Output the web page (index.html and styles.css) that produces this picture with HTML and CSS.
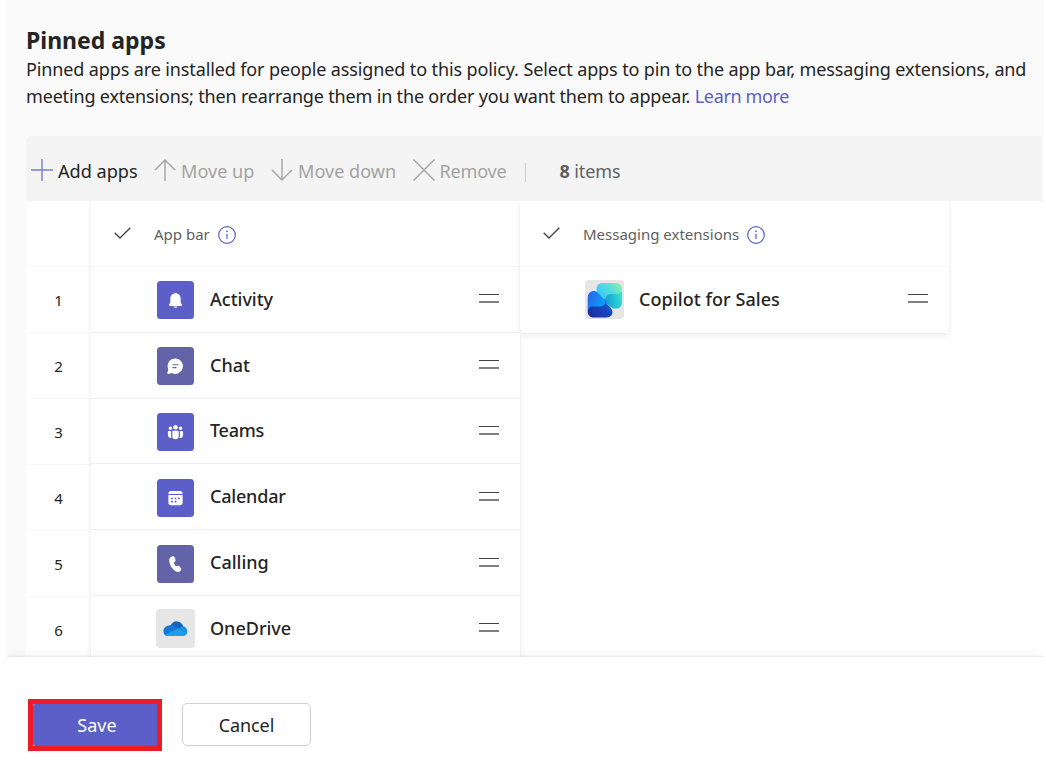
FILE: index.html
```html
<!DOCTYPE html>
<html lang="en">
<head>
<meta charset="utf-8">
<title>Pinned apps</title>
<link rel="stylesheet" href="styles.css">
</head>
<body>
<main class="panel">
  <h1 class="title">Pinned apps</h1>
  <p class="intro">Pinned apps are installed for people assigned to this policy. Select apps to pin to the app bar, messaging extensions, and<br><span class="intro-second">meeting extensions; then rearrange them in the order you want them to appear.</span> <a class="link">Learn more</a></p>

  <div class="toolbar">
    <button class="tool tool-add"><svg class="tool-icon" viewBox="0 0 22 22"><path d="M11 0v22M0 11h22"/></svg><span>Add apps</span></button>
    <button class="tool tool-up"><svg class="tool-icon" viewBox="0 0 22 22"><path d="M11 22V1M1 11 11 1l10 10"/></svg><span>Move up</span></button>
    <button class="tool tool-down"><svg class="tool-icon" viewBox="0 0 22 22"><path d="M11 0v21M1 11l10 10 10-10"/></svg><span>Move down</span></button>
    <button class="tool tool-remove"><svg class="tool-icon" viewBox="0 0 22 22"><path d="M.5.5l21 21M21.500.5l-21 21"/></svg><span>Remove</span></button>
    <span class="divider"></span>
    <span class="count"><b>8</b> items</span>
  </div>

  <div class="table">
    <div class="index">
      <div class="num head"></div>
      <div class="num">1</div><div class="num">2</div><div class="num">3</div>
      <div class="num">4</div><div class="num">5</div><div class="num">6</div>
    </div>

    <section class="column column-bar">
      <header class="col-head">
        <svg class="check" viewBox="0 0 17 12"><path d="M.7 5.700 6 11 16.300.7"/></svg>
        <span>App bar</span>
        <svg class="info" viewBox="0 0 18 18"><circle cx="9" cy="9" r="8.300"/><path d="M9 7.800v5.200"/><circle class="dot" cx="9" cy="5.300" r=".9"/></svg>
      </header>
      <div class="app">
        <svg class="app-icon" viewBox="0 0 38 38" preserveAspectRatio="none"><rect width="38" height="38" rx="3.500" fill="#5b5fc7"/><path fill="#fff" d="M19 12.200c-3.100 0-5.300 2.300-5.300 5.300v3.600L12.400 24c-.2.500.1.900.6.900h12c.5 0 .8-.4.600-.9l-1.300-2.900v-3.600c0-3-2.200-5.300-5.300-5.300zM17 25.400h4c-.2.800-1 1.300-2 1.300s-1.800-.5-2-1.300z"/></svg>
        <span class="name">Activity</span><i class="handle"></i>
      </div>
      <div class="app">
        <svg class="app-icon" viewBox="0 0 38 38" preserveAspectRatio="none"><rect width="38" height="38" rx="3.500" fill="#6264a7"/><path fill="#fff" d="M19 11.500a7.700 7.700 0 1 1-3.700 14.500l-3.900 1c-.6.100-1-.3-.8-.9l1-3.700A7.700 7.700 0 0 1 19 11.500z"/><path d="M16 17.800h6M16 20.600h4" stroke="#6264a7" stroke-width="1.100"/></svg>
        <span class="name">Chat</span><i class="handle"></i>
      </div>
      <div class="app">
        <svg class="app-icon" viewBox="0 0 38 38" preserveAspectRatio="none"><rect width="38" height="38" rx="3.500" fill="#5b5fc7"/><g fill="#fff"><circle cx="19" cy="14.200" r="2.300"/><circle cx="13.800" cy="15.200" r="1.700"/><circle cx="24.200" cy="15.200" r="1.700"/><path d="M15.700 19c0-.7.500-1.200 1.200-1.200h4.200c.7 0 1.200.5 1.200 1.200v4a3.300 3.300 0 0 1-6.600 0zM12.300 18h2.200v5.200c0 .9.200 1.400.4 1.900a3.500 3.500 0 0 1-3.700-3.100v-2.900c0-.7.500-1.100 1.100-1.100zM25.700 18h-2.200v5.200c0 .9-.2 1.400-.4 1.900a3.500 3.500 0 0 0 3.700-3.100v-2.900c0-.7-.5-1.100-1.100-1.100z"/></g></svg>
        <span class="name name-teams">Teams</span><i class="handle"></i>
      </div>
      <div class="app">
        <svg class="app-icon" viewBox="0 0 38 38" preserveAspectRatio="none"><rect width="38" height="38" rx="3.500" fill="#5b5fc7"/><path fill="#fff" d="M14.300 12h9.400a2.600 2.600 0 0 1 2.600 2.600v.4H11.700v-.4a2.600 2.600 0 0 1 2.600-2.600zM11.700 16h14.600v7.600a2.600 2.600 0 0 1-2.600 2.600h-9.400a2.600 2.600 0 0 1-2.600-2.600z"/><path stroke="#5b5fc7" stroke-width="1.600" d="M14.500 19.500h1.800M18.100 19.500h1.800M21.600 19.500h1.800M14.500 22.600h1.800M18.100 22.600h1.800"/></svg>
        <span class="name name-calendar">Calendar</span><i class="handle"></i>
      </div>
      <div class="app">
        <svg class="app-icon" viewBox="0 0 38 38" preserveAspectRatio="none"><rect width="38" height="38" rx="3.500" fill="#6264a7"/><path fill="#fff" d="M14.800 11.700l1.300-.4c.9-.2 1.600.2 2 1l.9 2.100c.3.700.1 1.500-.4 2l-1.300 1.200c.3 1.300 1.100 2.700 2.200 3.700l1.800-.5c.7-.2 1.400 0 1.900.6l1.400 1.800c.5.700.5 1.500-.1 2.100l-.9.900c-.9.900-2.200 1.100-3.400.500-4.200-2-7.400-6.500-7.600-11.300-.1-1.700.7-3.200 2.200-3.700z"/></svg>
        <span class="name">Calling</span><i class="handle"></i>
      </div>
      <div class="app">
        <svg class="app-icon app-icon-wide" viewBox="0 0 39 39"><rect width="39" height="39" rx="4" fill="#e6e6e6"/><g transform="translate(7.200 12)"><path fill="#0f66c0" d="M7 5C8.500 1.800 11.200.1 14 .4c3 .2 5.200 2 6.100 4.800l-6 5z"/><path fill="#1278d6" d="M7.200 4.300c1.700-.2 2.900.2 4.200 1L20 11 3.500 15C1.400 14.600.2 12.500.2 10.300.2 7.200 3 4.500 7.200 4.300z"/><path fill="#1593e2" d="M14.500 7.700l3.500-1.900c4-1.500 6 1.800 6 4.400 0 1.500-.4 2.600-1 3.200z"/><path fill="#1c9cea" d="M1.500 13.700L14.500 7.800 23.400 12.800c-.8 1.600-2 2.200-3.500 2.200H4.800c-1.400 0-2.400-.4-3.300-1.300z"/></g></svg>
        <span class="name">OneDrive</span><i class="handle"></i>
      </div>
    </section>

    <section class="column column-ext">
      <header class="col-head">
        <svg class="check" viewBox="0 0 17 12"><path d="M.7 5.700 6 11 16.300.7"/></svg>
        <span>Messaging extensions</span>
        <svg class="info" viewBox="0 0 18 18"><circle cx="9" cy="9" r="8.300"/><path d="M9 7.800v5.200"/><circle class="dot" cx="9" cy="5.300" r=".9"/></svg>
      </header>
      <div class="app">
        <svg class="app-icon app-icon-wide" viewBox="0 0 39 39">
          <defs>
            <linearGradient id="top" x1="0" y1=".6" x2="1" y2="0"><stop offset="0" stop-color="#35c8f5"/><stop offset=".5" stop-color="#54dfdc"/><stop offset="1" stop-color="#9cf0a0"/></linearGradient>
            <linearGradient id="right" x1="0" y1=".6" x2="1" y2=".4"><stop offset="0" stop-color="#1295d8"/><stop offset="1" stop-color="#35dfd0"/></linearGradient>
            <linearGradient id="left" x1="0" y1="0" x2="1" y2=".4"><stop offset="0" stop-color="#2563e8"/><stop offset="1" stop-color="#0a9dfa"/></linearGradient>
            <linearGradient id="bottom" x1="0" y1=".7" x2="1" y2="0"><stop offset="0" stop-color="#1a2f9e"/><stop offset=".6" stop-color="#1748c4"/><stop offset="1" stop-color="#1b86d0"/></linearGradient>
          </defs>
          <rect width="39" height="39" rx="4" fill="#e6e6e6"/>
          <path fill="url(#right)" d="M19 19c0-4 3-7 7-7h11v11a5.500 5.500 0 0 1-5.500 5.500h-1c-4 0-5.500-2-7-3.500C21.500 23.500 19 22 19 19z"/>
          <path fill="url(#top)" d="M17 3h14.500A5.500 5.500 0 0 1 37 8.500c0 3.500-2.500 5.500-6 5.500h-4.500c-3 0-5.500 1.500-6 5.500l-7-6C9.500 9.500 12 3 17 3z"/>
          <path fill="url(#bottom)" d="M2.700 31.500c0-3.500 2.300-6.500 5.300-6.500h6.500c3.500 0 6-1.300 6-5.300 0 3 1.500 4.500 3.500 6.300 6 5 4 11.500-3.300 11.500H8.500c-3.500 0-5.800-2.500-5.800-6z"/>
          <path fill="url(#left)" d="M2.700 18c0-6.500 6.500-9 10.500-5l6 6c2.500 2.500.5 7.500-4 7.500H8c-3 0-5.300 1.500-5.300 5z"/>
        </svg>
        <span class="name name-copilot">Copilot for Sales</span><i class="handle"></i>
      </div>
    </section>
  </div>
</main>

<footer class="footer">
  <div class="callout"><button class="btn btn-save">Save</button></div>
  <button class="btn btn-cancel">Cancel</button>
</footer>
</body>
</html>
```
FILE: styles.css
```css
* { box-sizing: border-box; }
body {
  margin: 0;
  height: 763px;
  display: flex;
  flex-direction: column;
  background: #fff;
  color: #242424;
  font-family: "Noto Sans", "Open Sans", sans-serif;
  font-weight: 400;
  font-size: 18px;
  overflow: hidden;
}
button { font: inherit; border: 0; padding: 0; background: none; color: inherit; }

.panel {
  width: 1036px;
  height: 657px;
  margin-left: 7px;
  padding: 25px 0 0 19px;
  background: #fafafa;
  overflow: hidden;
}
.title { margin: 0; font-size: 23px; line-height: 31px; font-weight: 700; }
.intro { margin: 0; line-height: 27px; white-space: nowrap; letter-spacing: -.12px; }
.intro-second { letter-spacing: -.17px; }
.link { color: #5b5fc7; letter-spacing: -.35px; }

.toolbar {
  height: 65px;
  margin-top: 26px;
  padding: 3px 0 0 5px;
  display: flex;
  align-items: center;
  background: #f4f4f4;
  border-radius: 5px 0 0 0;
  font-size: 18.1px;
}
.tool { display: flex; align-items: center; gap: 5px; color: #a3a3a3; white-space: nowrap; }
.tool span { padding-top: 1px; }
.tool-icon { width: 22px; height: 22px; fill: none; stroke: #a3a3a3; stroke-width: 1.400; }
.tool-add { width: 123px; color: #242424; }
.tool-add .tool-icon { stroke: #7a7cd2; }
.tool-up { width: 117px; }
.tool-down { width: 141.5px; }
.tool-remove { width: 112px; letter-spacing: -.25px; }
.divider { width: 1px; height: 19px; margin-top: 4px; background: #cfcfcf; }
.count { margin-left: 34px; padding-top: 2px; color: #616161; font-size: 18px; letter-spacing: -.1px; }
.count b { font-weight: 700; }

.table { display: flex; align-items: flex-start; height: 460px; background: #fff; }
.index { width: 65px; font-size: 15px; }
.num {
  height: 66.100px;
  display: flex;
  align-items: center;
  justify-content: center;
  border-bottom: 1px solid #f8f8f8;
}
.num.head { height: 66px; }
.column {
  background: #fff;
  border-radius: 0 0 5px 5px;
  box-shadow: 0 3px 6px rgba(0, 0, 0, .08), 0 0 2px rgba(0, 0, 0, .05);
  clip-path: inset(0 -10px -10px -10px);
}
.column-bar { width: 429px; }
.column-ext { width: 429px; }
.col-head {
  height: 66px;
  display: flex;
  align-items: center;
  padding: 1px 0 0 23px;
  border-bottom: 1px solid #f7f7f7;
  color: #616161;
  font-size: 15px;
}
.check { width: 17px; height: 12px; margin: -3px 23px 0 0; fill: none; stroke: #424242; stroke-width: 1.300; }
.info { width: 18px; height: 18px; margin: 1px 0 0 8px; fill: none; stroke: #5b5fc7; stroke-width: 1.200; }
.info .dot { fill: #5b5fc7; stroke: none; }
.app {
  height: 65.800px;
  display: flex;
  align-items: center;
  padding: 0 21px 0 65px;
  border-bottom: 1px solid #efefef;
}
.column-ext .app { border-bottom-color: #fff; }
.app-icon { width: 37px; height: 38px; margin: 2px 1px 0; }
.app-icon-wide { width: 39px; height: 39px; margin: 1px 0 0; }
.name { margin: -1px 0 0 15px; font-weight: 500; }
.name-teams { letter-spacing: -.25px; }
.name-calendar { letter-spacing: -.2px; }
.name-copilot { letter-spacing: .07px; }
.handle {
  width: 20px;
  height: 9px;
  margin: -1px 0 0 auto;
  border-top: 1px solid #424242;
  border-bottom: 2px solid #808080;
}

.footer {
  position: relative;
  width: 1036px;
  flex: 1;
  margin-left: 7px;
  padding: 42px 0 0 21px;
  display: flex;
  align-items: flex-start;
  gap: 20px;
  background: #fff;
  box-shadow: 0 0 2px rgba(0, 0, 0, .14), 0 -2px 9px rgba(0, 0, 0, .05);
  clip-path: inset(-14px 0 0 0);
}
.callout { border: 5px solid #ed1c24; width: 134px; height: 52px; }
.btn-save { display: block; width: 124px; height: 42px; padding-left: 4px; background: #5b5fc7; color: #fff; border-radius: 2px 0 0 2px; }
.btn-cancel { width: 129px; height: 43px; margin-top: 4px; border: 1px solid #d1d1d1; border-radius: 5px; letter-spacing: -.1px; }
```
